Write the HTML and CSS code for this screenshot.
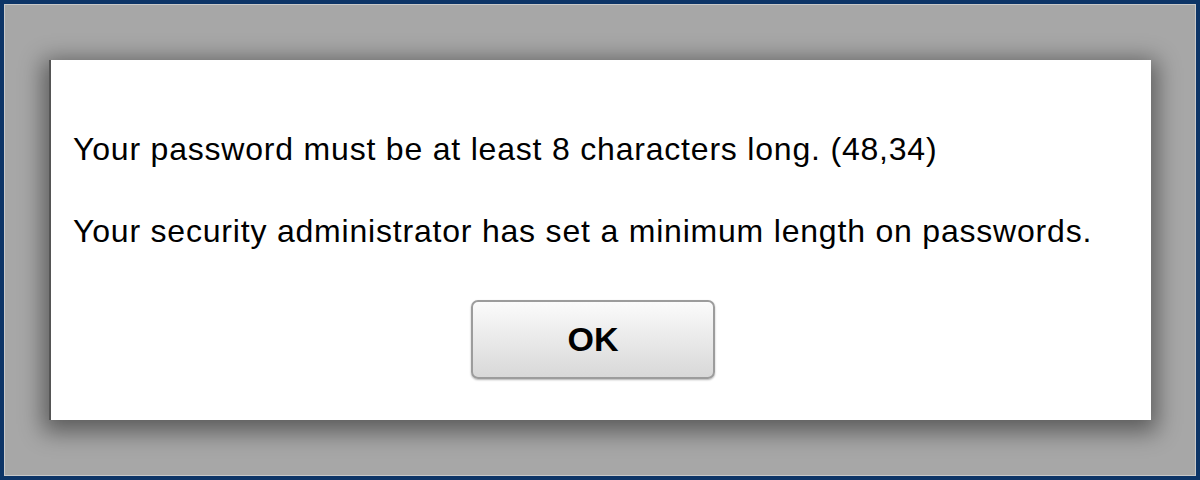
FILE: index.html
```html
<!DOCTYPE html>
<html lang="en">
<head>
    <meta charset="UTF-8">
    <title>Password</title>
    <link rel="stylesheet" href="styles.css">
</head>
<body>
    <div class="frame">
        <div class="dialog">
            <p class="msg first">Your password must be at least 8 characters long. (48,34)</p>
            <p class="msg">Your security administrator has set a minimum length on passwords.</p>
            <div class="actions">
                <button class="ok-button">OK</button>
            </div>
        </div>
    </div>
</body>
</html>
```
FILE: styles.css
```css
/* General Styles */
html, body {
    margin: 0;
    padding: 0;
}

body {
    width: 1200px;
    height: 480px;
    background-color: #0d3567;
    padding: 4px;
    box-sizing: border-box;
    font-family: Arial, "Liberation Sans", sans-serif;
}

.frame {
    height: 100%;
    box-sizing: border-box;
    border: 1px solid #c9c9c9;
    background-color: #a7a7a7;
    padding: 55px 44px 0 44px;
}

.dialog {
    height: 360px;
    box-sizing: border-box;
    background-color: #fff;
    border-left: 2px solid #555;
    box-shadow: 0 6px 22px 6px rgba(0, 0, 0, 0.45);
    padding: 73px 0 0 22px;
}

.msg {
    margin: 0;
    font-size: 32px;
    line-height: 32px;
    letter-spacing: 0.8px;
    color: #000;
}

.msg.first {
    margin-bottom: 50px;
}

.actions {
    display: flex;
    justify-content: center;
    margin-top: 53px;
    padding-right: 38px;
}

.ok-button {
    width: 244px;
    height: 79px;
    border: 2px solid #9c9c9c;
    border-radius: 7px;
    background: linear-gradient(#fbfbfb, #e6e6e6 60%, #d8d8d8);
    font-family: Arial, "Liberation Sans", sans-serif;
    font-size: 34px;
    font-weight: bold;
    color: #000;
    box-shadow: 0 1px 2px rgba(0, 0, 0, 0.3);
}
```
